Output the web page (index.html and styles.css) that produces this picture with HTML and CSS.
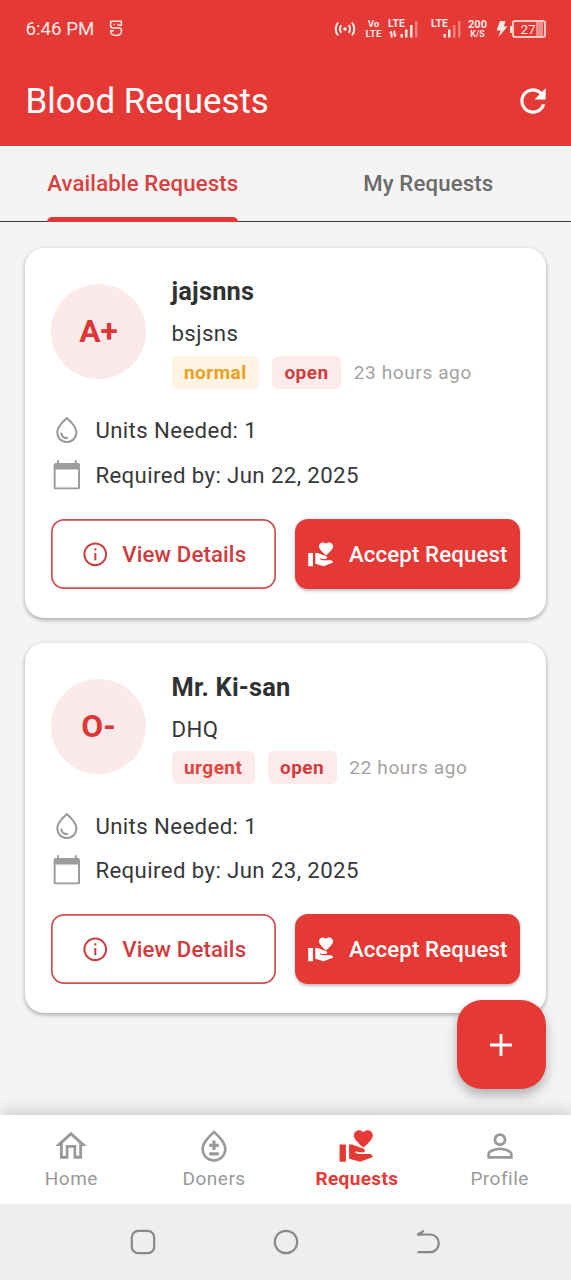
FILE: index.html
```html
<!DOCTYPE html>
<html lang="en">
<head>
<meta charset="utf-8">
<title>Blood Requests</title>
<link rel="stylesheet" href="styles.css">
</head>
<body>
<svg class="defs" width="0" height="0">
  <symbol id="drop" viewBox="0 0 24 24"><path d="M12,2c-5.33,4.55-8,8.48-8,11.8c0,4.98,3.8,8.2,8,8.2s8-3.22,8-8.2C20,10.48,17.33,6.55,12,2z M12,20.400c-3.500,0-6.400-2.700-6.400-6.600c0-2.400,2-5.700,6.400-9.600c4.400,3.900,6.400,7.200,6.400,9.600C18.400,17.700,15.500,20.400,12,20.400z M7.83,14c0.37,0,0.67,0.26,0.74,0.62c0.41,2.22,2.28,2.98,3.64,2.87c0.43-0.02,0.79,0.32,0.79,0.75c0,0.4-0.32,0.73-0.72,0.75c-2.13,0.13-4.62-1.09-5.19-4.12C7.01,14.42,7.37,14,7.83,14z"/></symbol>
  <symbol id="calendar" viewBox="0 0 24 24"><path d="M20.500 3h-1V1H18v2H6V1H4.500v2h-1C2.700 3 2 3.700 2 4.500v17c0 .8.7 1.500 1.500 1.500h17c.8 0 1.500-.7 1.500-1.500v-17c0-.8-.7-1.500-1.500-1.500zm0 18.500h-17V8h17v13.500z"/></symbol>
  <symbol id="info" viewBox="0 0 24 24"><path d="M11.200 7h1.700v1.800h-1.700zm0 4h1.700v6h-1.700zM12 2C6.480 2 2 6.480 2 12s4.480 10 10 10 10-4.480 10-10S17.520 2 12 2zm0 18.300c-4.600 0-8.300-3.700-8.300-8.300S7.400 3.700 12 3.700s8.300 3.700 8.300 8.300-3.700 8.300-8.300 8.300z"/></symbol>
  <symbol id="give" viewBox="0 0 24 24"><path d="M1 11h4v11H1zM16 3.25C16.65 2.49 17.66 2 18.7 2 20.55 2 22 3.45 22 5.3c0 2.27-2.91 4.9-6 7.7-3.09-2.81-6-5.44-6-7.7C10 3.45 11.45 2 13.3 2c1.04 0 2.05.49 2.7 1.25zM20 17h-7l-2.09-.73.33-.94L13 16h2.82c.65 0 1.18-.53 1.18-1.18 0-.49-.31-.93-.77-1.11L8.97 11H7v9.02L14 22l8.01-3c-.01-1.1-.9-2-2.01-2z"/></symbol>
</svg>
<div class="screen">
  <header class="header">
    <div class="status">
      <span class="clock">6:46 PM</span>
      <svg class="s-icon" width="14" height="18" viewBox="0 0 14 18"><path d="M13 1.300H3.500Q1.600 1.300 1.600 4V5.500Q1.600 8 4 8H10.500Q12.500 8 12.500 10.500Q12.500 15.500 7 15.500Q1.600 15.500 1.600 10.700H5M1 .8 2.500 2.500M12.400 1.500V5.300H9.500" fill="none" stroke="currentColor" stroke-width="1.500"/><path d="M4.600 3.800H6V5.200H4.600zM8.200 3.800H9.600V5.200H8.200z"/></svg>
      <svg class="hotspot" width="22" height="18" viewBox="0 0 22 18"><circle cx="11" cy="9" r="1.800"/><path d="M7.300 5.200Q4.600 9 7.300 12.800M14.700 5.200Q17.400 9 14.700 12.800M4 2.500Q-.5 9 4 15.500M18 2.500Q22.500 9 18 15.500" fill="none" stroke="currentColor" stroke-width="2"/></svg>
      <span class="volte"><b>Vo</b><b>LTE</b></span>
      <span class="signal"><b>LTE</b>
        <svg width="30" height="18" viewBox="0 0 30 18"><path d="M2.500 17.500V13H1L3 10.500 4.500 13V17.500zM5.500 10.500H7.300V14.500H9L7 17.500 5.500 15.500zM12.500 14H15V17.500H12.500zM17 9.500H19.500V17.500H17zM22 5H24.500V17.500H22z"/><path class="dim" d="M27 1H29.500V17.500H27z"/></svg>
      </span>
      <span class="signal second"><b>LTE</b>
        <svg width="30" height="18" viewBox="0 0 30 18"><path d="M12.500 14H15V17.500H12.500zM17 9.500H19.500V17.500H17z"/><path class="dim" d="M22 5H24.500V17.500H22zM27 1H29.500V17.500H27z"/></svg>
      </span>
      <span class="speed"><b>200</b><small>K/S</small></span>
      <svg class="bolt" width="12" height="16" viewBox="0 0 12 16"><path d="M4 0H9.500L8 5.500H11.500L2.500 16 4.500 9.500H.5z"/></svg>
      <span class="battery"><i></i><span>27</span></span>
    </div>
    <div class="bar">
      <h1>Blood Requests</h1>
      <svg width="38" height="38" viewBox="0 0 24 24"><path d="M17.650 6.350C16.200 4.900 14.210 4 12 4c-4.420 0-7.990 3.580-7.990 8s3.570 8 7.990 8c3.730 0 6.840-2.550 7.730-6h-2.080c-.82 2.330-3.040 4-5.650 4-3.310 0-6-2.690-6-6s2.690-6 6-6c1.660 0 3.140.69 4.220 1.780L13 11h7V4l-2.350 2.350z"/></svg>
    </div>
  </header>
  <nav class="tabs">
    <div class="tab active"><span>Available Requests</span></div>
    <div class="tab"><span>My Requests</span></div>
  </nav>
  <main class="list">
    <article class="card">
      <div class="top">
        <div class="group">A+</div>
        <div class="who">
          <h2>jajsnns</h2>
          <p>bsjsns</p>
          <div class="meta"><span class="badge normal">normal</span><span class="badge open">open</span><time>23 hours ago</time></div>
        </div>
      </div>
      <div class="fact"><svg><use href="#drop"/></svg>Units Needed: 1</div>
      <div class="fact"><svg><use href="#calendar"/></svg>Required by: Jun 22, 2025</div>
      <div class="actions">
        <button class="btn outline"><svg><use href="#info"/></svg>View Details</button>
        <button class="btn solid"><svg><use href="#give"/></svg>Accept Request</button>
      </div>
    </article>
    <article class="card">
      <div class="top">
        <div class="group">O-</div>
        <div class="who">
          <h2>Mr. Ki-san</h2>
          <p>DHQ</p>
          <div class="meta"><span class="badge urgent">urgent</span><span class="badge open">open</span><time>22 hours ago</time></div>
        </div>
      </div>
      <div class="fact"><svg><use href="#drop"/></svg>Units Needed: 1</div>
      <div class="fact"><svg><use href="#calendar"/></svg>Required by: Jun 23, 2025</div>
      <div class="actions">
        <button class="btn outline"><svg><use href="#info"/></svg>View Details</button>
        <button class="btn solid"><svg><use href="#give"/></svg>Accept Request</button>
      </div>
    </article>
    <button class="fab" aria-label="Add"><svg width="38" height="38" viewBox="0 0 24 24"><path d="M19 12.900h-6.100V19h-1.800v-6.100H5v-1.800h6.100V5h1.800v6.100H19z"/></svg></button>
  </main>
  <nav class="bottom">
    <div class="item"><svg viewBox="0 0 24 24"><path d="M12 5.500l5.200 4.700V18.200h-1.900v-6.900H8.700v6.900H6.800v-8l5.200-4.700M12 3L2 12h3v8h5.400v-6.900h3.200v6.900H19v-8h3L12 3z"/></svg>Home</div>
    <div class="item"><svg viewBox="0 0 24 24"><path d="M12,2c-5.330,4.550-8,8.480-8,11.800c0,4.980,3.800,8.200,8,8.200s8-3.220,8-8.200C20,10.480,17.330,6.550,12,2z M12,20.300c-3.500,0-6.300-2.700-6.300-6.500c0-2.400,2-5.600,6.300-9.500c4.300,3.900,6.300,7.100,6.300,9.500C18.300,17.600,15.500,20.300,12,20.300z M9 16h6v2H9z M13 10.600V8.600h-2v2H9v2h2v2h2v-2h2v-2z"/></svg>Doners</div>
    <div class="item current"><svg><use href="#give"/></svg>Requests</div>
    <div class="item"><svg viewBox="0 0 24 24"><path d="M12 5.700c1.300 0 2.300 1 2.300 2.300s-1 2.300-2.300 2.300S9.700 9.300 9.700 8s1-2.300 2.300-2.300m0 9c2.970 0 6.300 1.460 6.300 2.300v1.300H5.700V17c0-.84 3.330-2.300 6.300-2.300M12 4C9.790 4 8 5.790 8 8s1.790 4 4 4 4-1.790 4-4-1.790-4-4-4zm0 9c-2.670 0-8 1.340-8 4v3h16v-3c0-2.660-5.330-4-8-4z"/></svg>Profile</div>
  </nav>
  <div class="system">
    <svg width="26" height="26" viewBox="0 0 26 26"><rect x="1.800" y="1.800" width="22.400" height="22.400" rx="6.500"/></svg>
    <svg width="26" height="26" viewBox="0 0 26 26"><circle cx="13" cy="13" r="11.200"/></svg>
    <svg width="26" height="26" viewBox="0 0 26 26"><path d="M2.500 5.500H15A8.800 8.800 0 0 1 15 23.200H2.500"/><path class="tip" d="M2 6.500V4.500L8.500 1 9.500 2 7.500 4.500V6.500z"/></svg>
  </div>
</div>
</body>
</html>
```
FILE: styles.css
```css
* { box-sizing: border-box; }
body { margin: 0; font-family: Roboto, sans-serif; background: #f4f4f4; color: #37383a; }
h1, h2, p { margin: 0; font-weight: 400; }
svg { fill: currentColor; flex: none; display: block; }
.defs { position: absolute; }
.screen { width: 571px; height: 1280px; display: flex; flex-direction: column; overflow: hidden; }

.header { height: 146px; flex: none; background: #e53935; color: #fff; }
.status { height: 56px; padding: 2px 25px 0 25.500px; display: flex; align-items: center; color: #ffe9e7; }
.clock { font-size: 18.700px; width: 70px; white-space: nowrap; }
.s-icon { margin-left: 13px; }
.hotspot { margin-left: 211.500px; }
.volte { display: flex; flex-direction: column; align-items: center; width: 17px; margin-left: 9px; font-size: 9.800px; line-height: 10px; }
.volte b { height: 10px; }
.signal { position: relative; width: 30px; height: 18px; margin-left: 6px; }
.signal b { position: absolute; left: 0; top: -1px; font-size: 10.500px; line-height: 10px; }
.signal.second { margin-left: 13px; }
.dim { opacity: .4; }
.speed { display: flex; flex-direction: column; align-items: center; width: 19px; margin-left: 7px; font-size: 11px; line-height: 11px; }
.speed small { font-size: 8.800px; line-height: 9px; font-weight: 700; }
.bolt { margin-left: 9px; }
.battery { display: flex; align-items: center; margin-left: 2px; }
.battery i { width: 2px; height: 7px; background: currentColor; }
.battery span { width: 34px; height: 18px; border: 2px solid #fbc9c6; border-radius: 3px; font-size: 13.500px; line-height: 14px; text-align: center; padding-right: 2px; background: linear-gradient(90deg, transparent 22px, #f08f8c 22px, #f08f8c 29px, transparent 29px); }
.bar { height: 90px; padding: 0 19px 0 25.500px; display: flex; align-items: center; justify-content: space-between; }
.bar h1 { font-size: 34.900px; }

.tabs { height: 76px; flex: none; display: flex; border-bottom: 1.500px solid #3a3a3a; }
.tab { flex: 1; display: flex; justify-content: center; font-size: 22.200px; font-weight: 500; letter-spacing: .14px; color: #6b6b6b; }
.tab span { height: 75px; line-height: 74px; }
.tab.active span { color: #d9403e; }
.tab.active span::after { content: ""; display: block; height: 5px; margin-top: -3px; border-radius: 5px 5px 0 0; background: #e53935; }

.list { position: relative; flex: 1; padding: 26px 25.500px 0 25px; display: flex; flex-direction: column; gap: 25px; }
.card { height: 370px; background: #fff; border-radius: 19px; padding: 25.500px 25.500px 0 26px; box-shadow: 0 2px 4px rgba(0,0,0,.26), 0 1px 5px rgba(0,0,0,.08); }
.card + .card { padding-top: 25.800px; }
.top { height: 115px; display: flex; align-items: center; gap: 25.500px; }
.group { width: 95px; height: 95px; border-radius: 50%; background: #fce9ea; color: #dc3734; font-size: 31.700px; font-weight: 700; display: flex; align-items: center; justify-content: center; }
.who h2 { font-size: 25.400px; font-weight: 700; letter-spacing: .2px; line-height: 36px; height: 36px; color: #303133; }
.who p { font-size: 22.200px; letter-spacing: .4px; line-height: 48px; height: 46.500px; }
.meta { display: flex; align-items: center; height: 33px; font-size: 19px; letter-spacing: .63px; }
.badge { height: 33px; line-height: 33px; padding: 0 12.500px; border-radius: 6px; font-weight: 700; letter-spacing: .45px; margin-right: 12.700px; }
.normal { background: #fff3e3; color: #eda01f; }
.open { background: #fdeaea; color: #d03c3d; }
.urgent { background: #fdeaea; color: #e04540; }
.meta time { color: #a3a3a3; }
.fact { display: flex; align-items: center; gap: 12.700px; height: 44.500px; font-size: 22.200px; letter-spacing: .4px; }
.top + .fact { margin-top: 19.500px; }
.fact svg { width: 31.700px; height: 31.700px; color: #9c9c9c; }
.actions { display: flex; gap: 19px; margin-top: 22px; }
.btn { flex: 1 1 0; min-width: 0; height: 70px; border-radius: 13px; border: 0; padding: 0; display: flex; align-items: center; justify-content: center; gap: 13px; font: 500 22.200px Roboto, sans-serif; letter-spacing: .14px; white-space: nowrap; }
.btn svg { width: 28.500px; height: 28.500px; }
.outline { background: #fff; box-shadow: inset 0 0 0 1.700px #cf4f52; color: #d03c3d; }
.solid { background: #e53935; color: #fff; box-shadow: 0 1.500px 3px rgba(0,0,0,.25); }
.fab { position: absolute; right: 25.500px; bottom: 26px; width: 89px; height: 89px; border: 0; padding: 0; border-radius: 25px; background: #e53935; color: #fff; display: flex; align-items: center; justify-content: center; box-shadow: 0 6px 12px rgba(0,0,0,.28); }

.bottom { height: 89px; flex: none; position: relative; background: #fff; display: flex; padding-top: 12px; box-shadow: 0 -2px 16px rgba(0,0,0,.2); }
.item { flex: 1; display: flex; flex-direction: column; align-items: center; font-size: 19px; line-height: 28px; letter-spacing: .5px; color: #999; }
.item svg { width: 38px; height: 38px; }
.item.current { color: #e53935; font-weight: 700; letter-spacing: .35px; }
.system { height: 76px; flex: none; position: relative; background: #eee; display: flex; align-items: center; justify-content: center; gap: 116.500px; }
.system svg { fill: none; stroke: #898989; stroke-width: 2.200; }
.system .tip { fill: #898989; stroke: none; }
```
